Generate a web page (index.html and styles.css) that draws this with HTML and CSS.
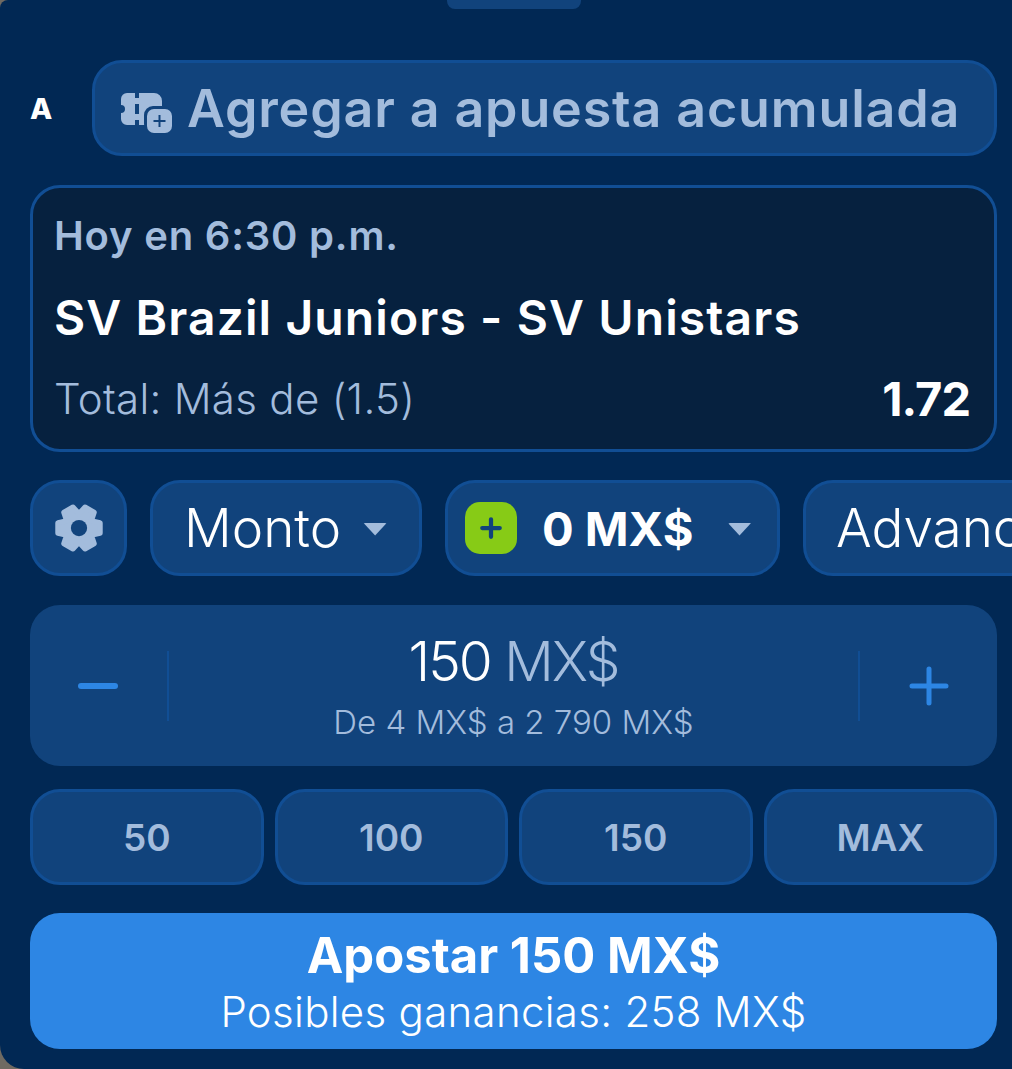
FILE: index.html
```html
<!DOCTYPE html>
<html lang="es">
<head>
    <meta charset="UTF-8">
    <meta name="viewport" content="width=device-width, initial-scale=1.0">
    <title>Apuesta</title>
    <link rel="stylesheet" href="styles.css">
</head>
<body>
    <div class="sheet">
        <div class="handle"></div>

        <div class="top-row">
            <span class="top-letter">A</span>
            <button class="accum-btn">
                <svg class="accum-icon" viewBox="0 0 51 40">
                    <path d="M6 0h8v5h4V0h15a8 8 0 0 1 8 8v16a8 8 0 0 1-8 8H18v-5h-4v5H6a6 6 0 0 1-6-6v-6a4 4 0 0 0 0-8V6a6 6 0 0 1 6-6z" fill="#a3bcdc"/>
                    <rect x="14" y="11" width="4" height="10" fill="#11437c"/>
                    <rect x="23" y="13" width="28" height="27" rx="9" fill="#11437c"/>
                    <rect x="26" y="16" width="25" height="24" rx="7" fill="#a3bcdc"/>
                    <path d="M38.5 22v12M32.5 28h12" stroke="#11437c" stroke-width="2"/>
                </svg>
                <span>Agregar a apuesta acumulada</span>
            </button>
        </div>

        <div class="event-card">
            <div class="event-time">Hoy en 6:30 p.m.</div>
            <div class="event-name">SV Brazil Juniors - SV Unistars</div>
            <div class="event-line">
                <span class="event-market">Total: Más de (1.5)</span>
                <span class="event-odds">1.72</span>
            </div>
        </div>

        <div class="toolbar">
            <button class="tool-btn gear-btn">
                <svg class="gear" viewBox="0 0 48 48">
                    <path d="M43.4 19.2L43.4 28.8L35.3 30.5L37.9 38.4L29.5 43.2L24 37L18.5 43.2L10.1 38.4L12.7 30.5L4.6 28.8L4.6 19.2L12.7 17.5L10.1 9.6L18.5 4.8L24 11L29.5 4.8L37.9 9.6L35.3 17.5Z" fill="#a3bcdc" stroke="#a3bcdc" stroke-width="5" stroke-linejoin="round"/>
                    <circle cx="24" cy="24" r="7.5" fill="#11437c"/>
                </svg>
            </button>
            <button class="tool-btn type-btn">
                <span class="tool-text">Monto</span>
                <span class="caret"></span>
            </button>
            <button class="tool-btn bonus-btn">
                <span class="bonus-plus">
                    <svg viewBox="0 0 24 24"><path d="M12 5v14M5 12h14" stroke="#11437c" stroke-width="3.4" stroke-linecap="round"/></svg>
                </span>
                <span class="bonus-text">0 MX$</span>
                <span class="caret"></span>
            </button>
            <button class="tool-btn adv-btn">
                <span class="tool-text">Advanced</span>
            </button>
        </div>

        <div class="stepper">
            <button class="step-btn step-minus">
                <svg viewBox="0 0 40 40"><path d="M3 20h34" stroke="#2d86e4" stroke-width="6" stroke-linecap="round"/></svg>
            </button>
            <div class="stake">
                <div class="stake-value">150 <span class="stake-cur">MX$</span></div>
                <div class="stake-range">De 4 MX$ a 2 790 MX$</div>
            </div>
            <button class="step-btn step-plus">
                <svg viewBox="0 0 40 40"><path d="M20 3v34M3 20h34" stroke="#2d86e4" stroke-width="5" stroke-linecap="round"/></svg>
            </button>
        </div>

        <div class="quick-row">
            <button class="quick-btn">50</button>
            <button class="quick-btn">100</button>
            <button class="quick-btn">150</button>
            <button class="quick-btn">MAX</button>
        </div>

        <button class="bet-btn">
            <span class="bet-title">Apostar 150 MX$</span>
            <span class="bet-sub">Posibles ganancias: 258 MX$</span>
        </button>
    </div>
</body>
</html>
```

FILE: styles.css
```css
* {
    margin: 0;
    padding: 0;
    box-sizing: border-box;
    font-family: 'Inter', 'Open Sans', sans-serif;
}

body {
    background: #6f6a62;
    width: 1012px;
    height: 1069px;
    overflow: hidden;
}

button {
    border: none;
    cursor: pointer;
}

.sheet {
    position: relative;
    width: 1012px;
    height: 1069px;
    padding: 60px 15px 0 30px;
    background: #012854;
    border-radius: 8px 0 0 24px;
    overflow: hidden;
}

.handle {
    position: absolute;
    top: 0;
    left: 447px;
    width: 134px;
    height: 9px;
    background: #11437c;
    border-radius: 0 0 8px 8px;
}

.top-row {
    display: flex;
    align-items: center;
    gap: 39px;
    margin-bottom: 29px;
}

.top-letter {
    width: 23px;
    color: #fff;
    font-size: 29px;
    font-weight: 800;
}

.accum-btn {
    flex: 1;
    height: 96px;
    display: flex;
    align-items: center;
    gap: 15px;
    padding-left: 26px;
    background: #11437c;
    border: 3px solid #114e94;
    border-radius: 30px;
    color: #a3bcdc;
    font-size: 52px;
    font-weight: 600;
    letter-spacing: 0.85px;
    white-space: nowrap;
}

.accum-icon {
    width: 51px;
    height: 40px;
    margin-top: 10px;
    flex-shrink: 0;
}

.event-card {
    height: 267px;
    padding: 24px 24px 0 21px;
    margin-bottom: 28px;
    background: #06213f;
    border: 3px solid #114e94;
    border-radius: 30px;
}

.event-time {
    color: #a3bcdc;
    font-size: 40px;
    font-weight: 600;
    letter-spacing: 0.8px;
    line-height: 48px;
    margin-bottom: 31px;
}

.event-name {
    color: #fff;
    font-size: 48px;
    font-weight: 600;
    letter-spacing: 1.1px;
    line-height: 54px;
    margin-bottom: 25px;
}

.event-line {
    display: flex;
    justify-content: space-between;
    align-items: center;
}

.event-market {
    color: #a3bcdc;
    font-size: 42px;
    font-weight: 300;
    letter-spacing: 0.3px;
}

.event-odds {
    color: #fff;
    font-size: 47px;
    font-weight: 700;
    letter-spacing: -1px;
}

.toolbar {
    display: flex;
    gap: 23px;
    height: 96px;
    margin-bottom: 29px;
    margin-right: -15px;
}

.tool-btn {
    height: 96px;
    display: flex;
    align-items: center;
    background: #11437c;
    border: 3px solid #114e94;
    border-radius: 30px;
    color: #fff;
    flex-shrink: 0;
}

.gear-btn {
    width: 97px;
    justify-content: center;
}

.gear {
    width: 52px;
    height: 52px;
}

.type-btn {
    width: 272px;
    padding-left: 31px;
    gap: 22px;
}

.tool-text {
    font-size: 53px;
    font-weight: 300;
}

.caret {
    width: 24px;
    height: 13px;
    background: #a3bcdc;
    clip-path: polygon(0 0, 100% 0, 50% 100%);
    border-radius: 2px;
    margin-top: 2px;
}

.bonus-btn {
    width: 335px;
    padding-left: 17px;
}

.bonus-plus {
    width: 52px;
    height: 52px;
    display: flex;
    align-items: center;
    justify-content: center;
    background: #87cb16;
    border-radius: 15px;
    margin-right: 25px;
}

.bonus-plus svg {
    width: 30px;
    height: 30px;
}

.bonus-text {
    font-size: 47px;
    font-weight: 700;
    margin-right: 34px;
}

.adv-btn {
    width: 300px;
    padding-left: 30px;
    border-radius: 30px 0 0 30px;
    border-right: none;
    justify-content: flex-start;
    overflow: hidden;
    white-space: nowrap;
}

.stepper {
    height: 161px;
    display: flex;
    align-items: center;
    background: #11437c;
    border-radius: 30px;
    margin-bottom: 23px;
}

.step-btn {
    width: 139px;
    height: 70px;
    display: flex;
    align-items: center;
    background: none;
    flex-shrink: 0;
}

.step-btn svg {
    width: 40px;
    height: 40px;
}

.step-minus {
    padding-left: 48px;
    border-right: 2px solid #114e94;
}

.step-plus {
    padding-left: 49px;
    border-left: 2px solid #114e94;
}

.stake {
    flex: 1;
    text-align: center;
    padding-bottom: 3px;
}

.stake-value {
    color: #fff;
    font-size: 55px;
    font-weight: 300;
    line-height: 70px;
    letter-spacing: -2px;
}

.stake-cur {
    color: #a3bcdc;
    font-weight: 300;
}

.stake-range {
    color: #a3bcdc;
    font-size: 33px;
    font-weight: 300;
    line-height: 42px;
    margin-top: 5px;
}

.quick-row {
    display: grid;
    grid-template-columns: repeat(4, 1fr);
    gap: 11px;
    margin-bottom: 28px;
}

.quick-btn {
    height: 96px;
    background: #11437c;
    border: 3px solid #114e94;
    border-radius: 30px;
    color: #a3bcdc;
    font-size: 37px;
    font-weight: 600;
}

.bet-btn {
    width: 100%;
    height: 136px;
    display: flex;
    flex-direction: column;
    align-items: center;
    justify-content: center;
    background: #2d86e4;
    border-radius: 30px;
    color: #fff;
}

.bet-title {
    font-size: 49px;
    font-weight: 700;
    line-height: 62px;
}

.bet-sub {
    font-size: 42px;
    font-weight: 300;
    letter-spacing: 0.3px;
    line-height: 50px;
}
```
